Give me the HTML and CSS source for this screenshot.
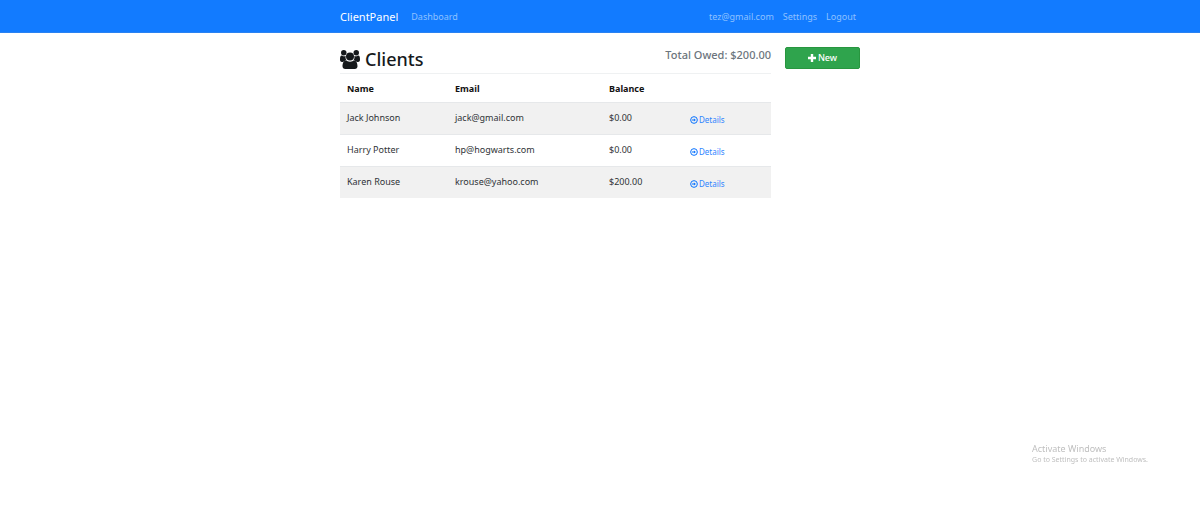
FILE: index.html
```html
<!DOCTYPE html>
<html lang="en">
<head>
<meta charset="utf-8">
<meta name="viewport" content="width=device-width, initial-scale=1">
<title>ClientPanel</title>
<link rel="stylesheet" href="styles.css">
</head>
<body>
<svg class="sprite" aria-hidden="true">
  <symbol id="icon-details" viewBox="0 0 16 16">
    <circle cx="8" cy="8" r="6.7" fill="none" stroke="currentColor" stroke-width="2"/>
    <path d="M4 7.100h3.800V4.800L11.800 8l-4 3.200V8.900H4z" fill="currentColor"/>
  </symbol>
</svg>
<header class="navbar">
  <nav class="container navbar-inner">
    <a class="brand" href="#">ClientPanel</a>
    <a class="nav-link" href="#">Dashboard</a>
    <div class="nav-right">
      <a class="nav-link" href="#">tez@gmail.com</a>
      <a class="nav-link" href="#">Settings</a>
      <a class="nav-link" href="#">Logout</a>
    </div>
  </nav>
</header>
<main class="container content">
  <section class="clients">
    <div class="heading">
      <h1 class="title">
        <svg class="users-icon" viewBox="0 0 40 38" fill="currentColor" aria-hidden="true">
          <circle cx="7.5" cy="5.5" r="5.5"/>
          <circle cx="32.5" cy="5.5" r="5.5"/>
          <path d="M0 19c0-5 1-8 3.500-8 1.500 0 2 1.500 5 1.500q1.500 0 3-.5c-1 4 0 6 1.500 9-3 0-5 1-6.500 3H4c-3 0-4-2-4-5z"/>
          <path d="M40 19c0-5-1-8-3.500-8-1.500 0-2 1.500-5 1.500q-1.500 0-3-.5c1 4 0 6-1.500 9 3 0 5 1 6.500 3H36c3 0 4-2 4-5z"/>
          <circle cx="20" cy="13" r="8"/>
          <path d="M12 21c2 0 4 2.500 8 2.500s6-2.500 8-2.500c5 0 7 6 7 11.500 0 3-2 5.500-5.500 5.500h-19C7 38 5 35.500 5 32.500 5 27 7 21 12 21z"/>
        </svg>
        Clients
      </h1>
      <p class="total">Total Owed: $200.00</p>
    </div>
    <table class="table">
      <colgroup><col class="col-name"><col class="col-email"><col class="col-balance"><col class="col-action"></colgroup>
      <thead>
        <tr><th scope="col">Name</th><th scope="col">Email</th><th scope="col">Balance</th><td></td></tr>
      </thead>
      <tbody>
        <tr><td>Jack Johnson</td><td>jack@gmail.com</td><td>$0.00</td><td><a class="details" href="#"><svg class="details-icon" aria-hidden="true"><use href="#icon-details"/></svg>Details</a></td></tr>
        <tr><td>Harry Potter</td><td>hp@hogwarts.com</td><td>$0.00</td><td><a class="details" href="#"><svg class="details-icon" aria-hidden="true"><use href="#icon-details"/></svg>Details</a></td></tr>
        <tr><td>Karen Rouse</td><td>krouse@yahoo.com</td><td>$200.00</td><td><a class="details" href="#"><svg class="details-icon" aria-hidden="true"><use href="#icon-details"/></svg>Details</a></td></tr>
      </tbody>
    </table>
  </section>
  <aside class="sidebar">
    <button class="new-button" type="button"><svg class="plus-icon" viewBox="0 0 8 8" aria-hidden="true"><path d="M2.800 0h2.400v2.800H8v2.400H5.200V8H2.800V5.200H0V2.800h2.800z" fill="currentColor"/></svg>New</button>
  </aside>
</main>
<div class="watermark">
  <p class="watermark-title">Activate Windows</p>
  <p class="watermark-text">Go to Settings to activate Windows.</p>
</div>
</body>
</html>
```
FILE: styles.css
```css
* { box-sizing: border-box; }
body {
  margin: 0;
  background: #fff;
  color: #2f3337;
  font: 9px/14px "Noto Sans", "Open Sans", sans-serif;
}
h1, p { margin: 0; }
a { text-decoration: none; }
.sprite { display: none; }
.container {
  width: 100%;
  max-width: 536px;
  margin: 0 auto;
  padding: 0 8px;
}
.navbar {
  background: #127bff;
  border-bottom: 1px solid #2a82f2;
}
.navbar-inner {
  display: flex;
  align-items: center;
  min-height: 32px;
  padding-top: 2px;
}
.brand {
  margin-right: 13px;
  color: #fff;
  font-size: 11px;
}
.nav-link { color: #8fc1ff; }
.nav-right {
  display: flex;
  gap: 9px;
  margin-left: auto;
  padding-right: 4px;
}
.content {
  display: flex;
  align-items: flex-start;
  gap: 14px;
  padding-top: 14px;
}
.clients { flex: 1; }
.heading {
  display: flex;
  justify-content: space-between;
  align-items: flex-start;
  padding-bottom: 2px;
}
.title {
  display: flex;
  align-items: center;
  gap: 5px;
  color: #16191c;
  font-size: 18px;
  font-weight: 500;
  line-height: 24px;
}
.users-icon {
  width: 20px;
  height: 19px;
}
.total {
  color: #6c757d;
  font-size: 11px;
  font-weight: 500;
  line-height: 16px;
}
.table {
  width: 100%;
  table-layout: fixed;
  border-spacing: 0;
}
.col-name { width: 108px; }
.col-email { width: 154px; }
.col-balance { width: 81px; }
.table th, .table td {
  height: 32px;
  padding: 8px 7px 7px;
  border-top: 1px solid #e6e8ea;
  text-align: left;
  vertical-align: top;
}
.table thead th, .table thead td {
  height: 29px;
  padding: 8px 7px 6px;
  border-top-color: #eff1f2;
}
.table th { color: #111; font-weight: 700; }
.table tbody tr:nth-child(odd) { background: #f1f1f1; }
.details {
  display: flex;
  align-items: center;
  gap: 1px;
  padding-top: 3px;
  color: #2d85ff;
  font-size: 8px;
  line-height: 12px;
}
.details-icon {
  width: 8px;
  height: 8px;
  color: #0872ff;
}
.sidebar { width: 75px; }
.new-button {
  display: flex;
  justify-content: center;
  align-items: center;
  gap: 2px;
  width: 100%;
  padding: 4px;
  border: 1px solid #28963f;
  border-radius: 2px;
  background: #2fa44d;
  color: #fff;
  font: 500 9px/12px "Noto Sans", "Open Sans", sans-serif;
}
.plus-icon {
  width: 8px;
  height: 8px;
}
.watermark {
  position: fixed;
  right: 52px;
  bottom: 42px;
  color: #bfbfbf;
}
.watermark-title { line-height: 12px; }
.watermark-text {
  font-size: 7px;
  line-height: 9px;
}
```
